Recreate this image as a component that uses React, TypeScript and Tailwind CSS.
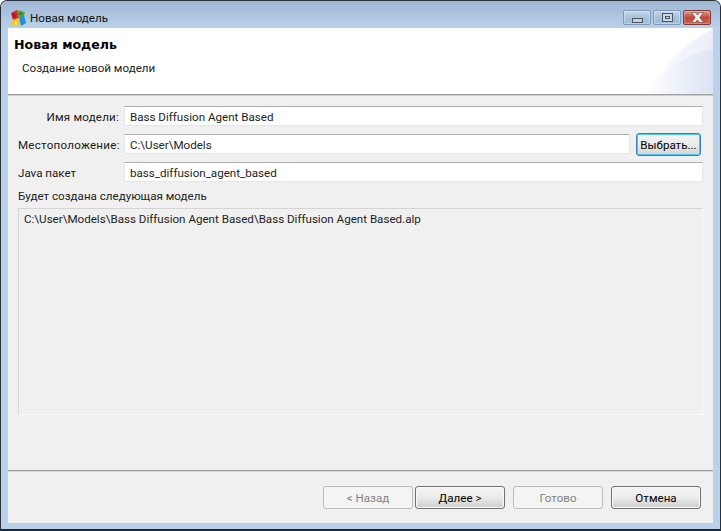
import React from "react";

function Logo() {
  return (
    <svg width="18" height="18" viewBox="0 0 18 18" className="shrink-0">
      <polygon points="2,4 8,1 10,9 4,11" fill="#d8262c" />
      <polygon points="8,1 16,3 15,7 10,9" fill="#5f9e3a" />
      <polygon points="10,9 15,6 17,14 12,17" fill="#1f8fe0" />
      <polygon points="1,15 4,11 10,9 11,17 3,17" fill="#f4c820" />
      <polygon points="5,15 7,12 8,16" fill="#f8f0c0" />
      <polygon points="10,3 14,4 13,6 10,6" fill="#3f7f2a" />
      <polygon points="3,5 6,4 7,8 4,9" fill="#b01820" />
    </svg>
  );
}

function CaptionButton({ kind }: { kind: "min" | "max" | "close" }) {
  if (kind === "close") {
    return (
      <div className="flex h-[15px] w-[28px] items-center justify-center rounded-[2px] border border-[#7a3a3a] bg-gradient-to-b from-[#dc9a90] via-[#c0473a] to-[#c9624f] shadow-[inset_0_0_0_1px_rgba(255,255,255,0.25)]">
        <svg width="15" height="11" viewBox="0 0 15 11">
          <path d="M1.5 0.5 L5.5 0.5 L7.5 3 L9.5 0.5 L13.5 0.5 L9.8 5.5 L13.5 10.5 L9.5 10.5 L7.5 8 L5.5 10.5 L1.5 10.5 L5.2 5.5 Z" fill="#f4ece8" stroke="#6b3a36" strokeWidth="0.6" />
        </svg>
      </div>
    );
  }
  return (
    <div className="flex h-[15px] w-[28px] items-center justify-center rounded-[2px] border border-[#7d98b8] bg-gradient-to-b from-[#c4d6ea] via-[#a9c2dc] to-[#9cb8d6] shadow-[inset_0_0_0_1px_rgba(255,255,255,0.35)]">
      {kind === "min" ? (
        <div className="mt-[5px] h-[5px] w-[11px] border border-[#4d5564] bg-[#c9d2dc]" />
      ) : (
        <div className="flex h-[9px] w-[11px] items-center justify-center border border-[#4d5564] bg-[#c9d6e4]">
          <div className="h-[3px] w-[5px] border border-[#4d5564]" />
        </div>
      )}
    </div>
  );
}

function Field({ value, className }: { value: string; className: string }) {
  return (
    <div className={`flex h-[20px] items-center rounded-[1px] border border-[#e3e6ea] border-t-[#abadb3] bg-white pl-[5px] pt-[3px] text-[#222] ${className}`}>
      {value}
    </div>
  );
}

function Btn({ label, variant }: { label: string; variant: "on" | "off" }) {
  return variant === "on" ? (
    <div className="flex h-[23px] w-[90px] items-center justify-center rounded-[3px] border border-[#707070] bg-gradient-to-b from-[#f4f4f4] via-[#ebebeb] via-50% to-[#cfcfcf] pt-[3px] text-black shadow-[inset_0_0_0_1px_#f8f8f8]">
      {label}
    </div>
  ) : (
    <div className="flex h-[23px] w-[90px] items-center justify-center rounded-[3px] border border-[#bcbcbc] bg-[#f4f4f4] pt-[3px] text-[#838383]">
      {label}
    </div>
  );
}

export default function App() {
  return (
    <div className="flex h-[531px] w-[721px] flex-col overflow-hidden rounded-t-[7px] border border-b-2 border-[#2a3138] border-b-[#1a2a34] bg-[#b9d1ea] font-['Roboto','Noto_Sans',sans-serif] text-[11.6px] leading-none text-[#1a1a1a]">
      <div className="flex h-[27px] shrink-0 bg-gradient-to-b from-[#9fb7d3] to-[#b9d1ea] pl-[8px] pr-[9px]">
        <div className="flex items-center gap-[3px] pt-[6px]">
          <Logo />
          <span className="pt-[2px] text-[#111]">Новая модель</span>
        </div>
        <div className="ml-auto flex gap-[2px] pt-[9px]">
          <CaptionButton kind="min" />
          <CaptionButton kind="max" />
          <CaptionButton kind="close" />
        </div>
      </div>

      <div className="mx-[7px] mb-[6px] flex min-h-0 flex-1 flex-col bg-[#f0f0f0]">
        <div className="relative h-[67px] shrink-0 overflow-hidden border-b border-[#a0a0a0] bg-white pl-[6px] pt-[11px] shadow-[0_1px_0_#cfcfcf]">
          <svg className="absolute right-0 top-0" width="70" height="66" viewBox="0 0 70 66">
            <defs>
              <linearGradient id="swa" x1="0" y1="0" x2="1" y2="0">
                <stop offset="0" stopColor="#ffffff" />
                <stop offset="1" stopColor="#ebeef8" />
              </linearGradient>
              <linearGradient id="swb" x1="0" y1="0" x2="1" y2="0">
                <stop offset="0" stopColor="#ffffff" />
                <stop offset="1" stopColor="#dce3f3" />
              </linearGradient>
            </defs>
            <path d="M2 66 C15 45 40 15 70 1 L70 66 Z" fill="url(#swa)" />
            <path d="M2 66 C15 50 30 30 70 21 L70 66 Z" fill="url(#swb)" />
          </svg>
          <div className="relative font-['DejaVu_Sans',sans-serif] text-[12.6px] font-bold text-black">Новая модель</div>
          <div className="relative pl-[8px] pt-[11px] text-[#222]">Создание новой модели</div>
        </div>

        <div className="flex min-h-0 flex-1 flex-col pl-[10px] pr-[10px] pt-[11px]">
          <div className="flex h-[20px] items-center">
            <div className="w-[101px] pt-[3px] text-right tracking-[0.2px]">Имя модели:</div>
            <Field value="Bass Diffusion Agent Based" className="ml-[5px] w-[579px]" />
          </div>
          <div className="mt-[8px] flex h-[20px] items-center">
            <div className="w-[101px] pt-[3px] text-right tracking-[0.25px]">Местоположение:</div>
            <Field value="C:\User\Models" className="ml-[5px] w-[506px]" />
            <div className="ml-[6px] flex h-[23px] w-[65px] items-center justify-center rounded-[3px] border border-[#3c7fb1] bg-gradient-to-b from-[#f4f4f4] via-[#ebebeb] via-50% to-[#d4d4d4] pt-[3px] text-black shadow-[inset_0_0_0_1px_#4fc8f0]">
              Выбрать...
            </div>
          </div>
          <div className="mt-[8px] flex h-[20px] items-center">
            <div className="w-[101px] pt-[3px]">Java пакет</div>
            <Field value="bass_diffusion_agent_based" className="ml-[5px] w-[579px]" />
          </div>
          <div className="mt-[9px] h-[11px] text-[#222]">Будет создана следующая модель</div>
          <div className="mt-[6px] h-[207px] w-[685px] border border-[#fafafa] border-t-[#d4d4d4] border-l-[#d8d8d8] bg-[#f0f0f0] pl-[5px] pt-[5px] text-[#222]">
            C:\User\Models\Bass Diffusion Agent Based\Bass Diffusion Agent Based.alp
          </div>
        </div>

        <div className="h-[53px] shrink-0 border-t border-[#a0a0a0] pr-[12px] pt-[15px] shadow-[inset_0_1px_0_#d8d8d8]">
          <div className="flex justify-end">
            <Btn label="< Назад" variant="off" />
            <div className="ml-[2px]"><Btn label="Далее >" variant="on" /></div>
            <div className="ml-[8px]"><Btn label="Готово" variant="off" /></div>
            <div className="ml-[8px]"><Btn label="Отмена" variant="on" /></div>
          </div>
        </div>
      </div>
    </div>
  );
}
